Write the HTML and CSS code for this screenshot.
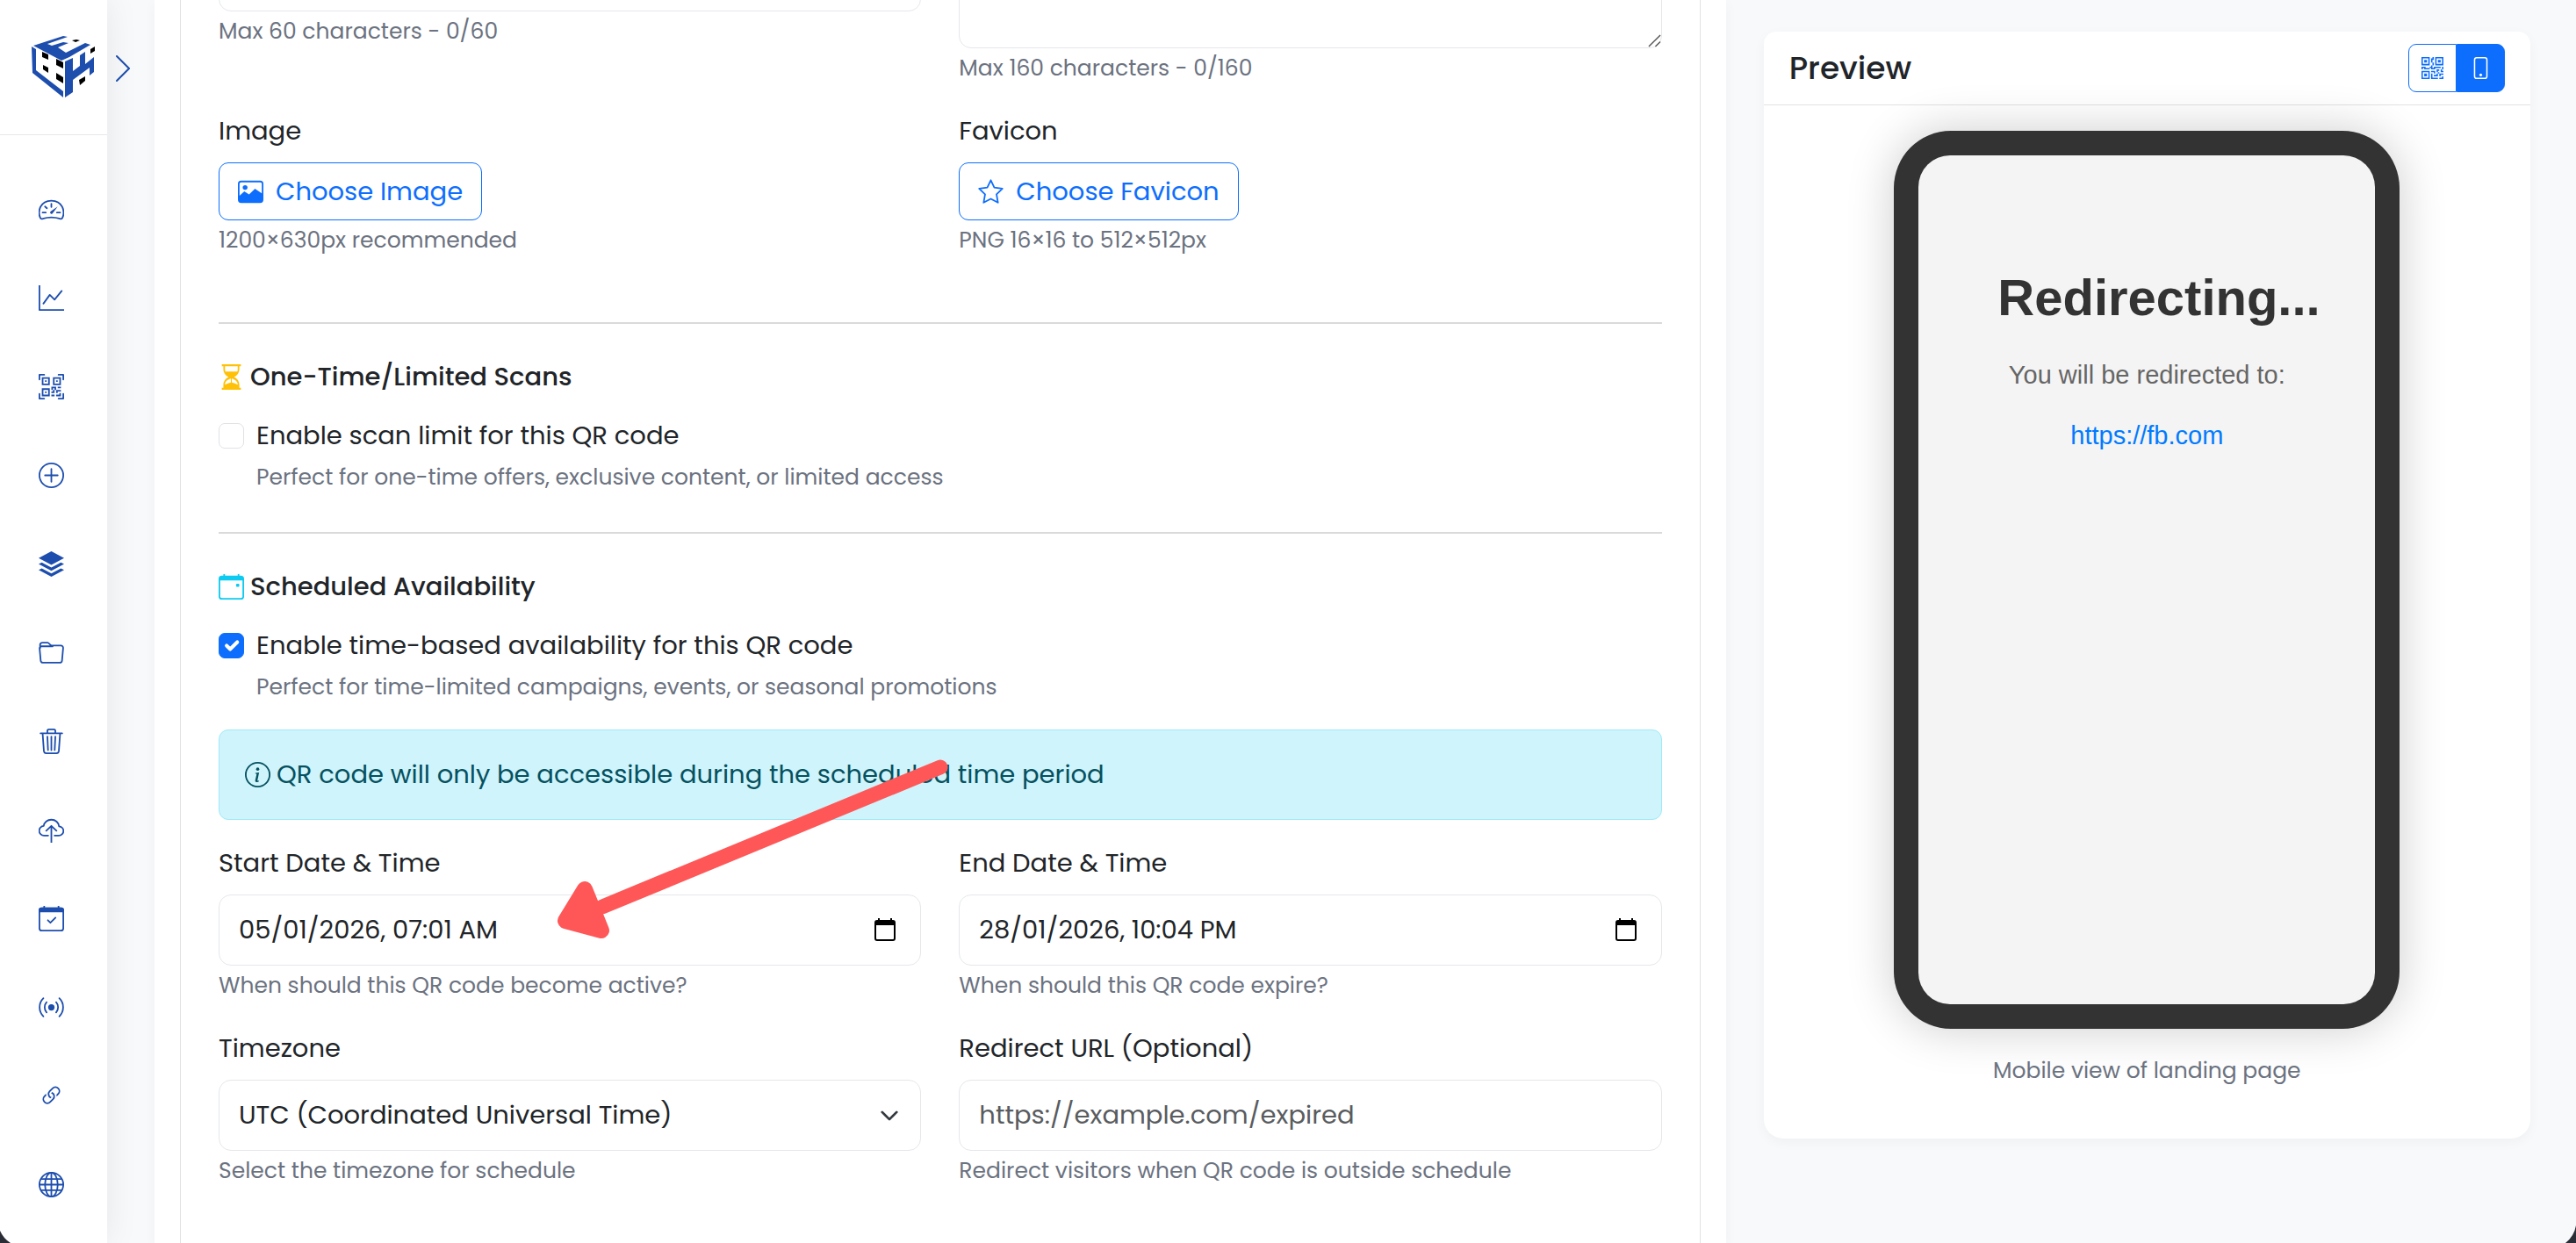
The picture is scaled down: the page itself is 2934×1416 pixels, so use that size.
FILE: index.html
```html
<!DOCTYPE html>
<html lang="en">
	<head>
		<meta charset="UTF-8">
		<title>QR Code</title>
		<link rel="stylesheet" href="styles.css">
	</head>
	<body>
		<aside class="sidebar">
			<div class="logo">
				<a href="#" aria-label="Home">
					<svg viewBox="0 0 73 71">
						<g fill="#1d4eae">
							<path d="M2 11 36 0l5 1-23 8 5 2 13-4 6 1-12 5 9 6 22-11 6 2-24 14-9 4z"/>
							<path d="M0 12l5 3v24l31 24v7L1 42z"/>
							<path d="M38 29l9-4v15l8-6V22l6-4v14l10-8v17l-5 4v-9L47 50v14l-9 6z"/>
						</g>
						<path d="M46 5l5-1 4 1-5 2zM67 15l5-3v5l-5 3zM12 18l7 3v6l-7-3zM28 26l8 4v7l-8-4zM13 33l6 3v6l-6-4zM28 42l8 5v7l-8-5zM54 50l7-4v5l-6 5z"/>
					</svg>
				</a>
				<button class="toggle" type="button" aria-label="Expand menu">
					<svg viewBox="0 0 16 30"><path d="M1 1l14 14L1 29"/></svg>
				</button>
			</div>
			<nav class="menu">
				<a href="#" aria-label="Dashboard"><svg viewBox="0 0 16 16"><path d="M1 13.2C-.7 9.500.8 2.500 8 2.500s8.700 7 7 10.700c-.2.600-.9.900-1.600.7-3.500-1.100-7.300-1.100-10.800 0-.7.200-1.400-.1-1.600-.7zM8 4.500v2M2.500 10h2M11.500 10h2M4 6.200l1.200 1.100"/><path class="fill" d="M12 6.200 8.900 10.400a.9.900 0 1 1-1.300-1.200z"/></svg></a>
				<a href="#" aria-label="Analytics"><svg viewBox="0 0 16 16"><path d="M.5 0v15.500H16M3 11.500 7 6l3 3 4.500-5.500"/></svg></a>
				<a href="#" aria-label="QR codes"><svg viewBox="0 0 16 16"><path class="fill" d="M0 .5A.5.5 0 0 1 .5 0h3a.5.5 0 0 1 0 1H1v2.5a.5.5 0 0 1-1 0zm12 0a.5.5 0 0 1 .5-.5h3a.5.5 0 0 1 .5.5v3a.5.5 0 0 1-1 0V1h-2.5a.5.5 0 0 1-.5-.5M.5 12a.5.5 0 0 1 .5.5V15h2.5a.5.5 0 0 1 0 1h-3a.5.5 0 0 1-.5-.5v-3a.5.5 0 0 1 .5-.5m15 0a.5.5 0 0 1 .5.5v3a.5.5 0 0 1-.5.5h-3a.5.5 0 0 1 0-1H15v-2.5a.5.5 0 0 1 .5-.5M4 4h1v1H4zM7 2H2v5h5zM3 3h3v3H3zm2 8H4v1h1zM7 9H2v5h5zm-4 1h3v3H3zm8-6h1v1h-1zM9 2h5v5H9zm1 1v3h3V3zM8 8v2h1v1H8v1h2v-2h1v2h1v-1h2v-1h-3V8zm2 2H9V9h1zm4 2h-1v1h-2v1h3zm-4 2v-1H8v1zM12 9h2V8h-2z"/></svg></a>
				<a href="#" aria-label="Create"><svg viewBox="0 0 16 16"><circle cx="8" cy="8" r="7.500"/><path d="M8 4v8M4 8h8"/></svg></a>
				<a href="#" aria-label="Bulk"><svg viewBox="0 0 16 16"><path class="fill" d="M8 0l8 4.300-8 4.200L0 4.300zM0 8l2-1 6 3.200L14 7l2 1-8 4.300zM0 11.700l2-1 6 3.200 6-3.200 2 1L8 16z"/></svg></a>
				<a href="#" aria-label="Folders"><svg viewBox="0 0 16 16"><path d="M1 5 .9 3.200c0-.9.600-1.500 1.500-1.500h3.300c.9 0 1.300 1.800 2.500 1.800h5.700c1 0 1.600.8 1.500 1.700l-.7 7.800c-.1.800-.7 1.300-1.400 1.300H2.700c-.8 0-1.400-.5-1.400-1.300L.6 5.200c0-.8.500-1.200 1.200-1.200h7"/></svg></a>
				<a href="#" aria-label="Trash"><svg viewBox="0 0 16 16"><path d="M1.200 3h13.600M5.500 3V1.500c0-.6.400-1 1-1h3c.6 0 1 .4 1 1V3M2.500 3l.8 11c.1.900.7 1.500 1.500 1.500h6.400c.8 0 1.400-.6 1.500-1.500l.8-11M5.500 5l.4 8.500M8 5v8.500M10.500 5l-.4 8.500"/></svg></a>
				<a href="#" aria-label="Upload"><svg viewBox="0 0 16 16"><path d="M6 11.500H3.500a3 3 0 0 1-.3-6C3.500 3.200 5.500 1.500 8 1.500c2.600 0 4.700 1.900 4.800 4.200a2.900 2.900 0 0 1-.2 5.800H10M8 16V5.500M4.800 8.500 8 5.400l3.200 3.100"/></svg></a>
				<a href="#" aria-label="Schedule"><svg viewBox="0 0 16 16"><rect x=".5" y="1.500" width="15" height="14" rx="1.500"/><path class="fill" d="M0 4V2.500C0 1.600.7 1 1.600 1H3V0h1v1h8V0h1v1h1.400c.9 0 1.600.6 1.600 1.500V4z"/><path d="M5.800 9l1.600 1.600 3.200-3.200"/></svg></a>
				<a href="#" aria-label="Broadcast"><svg viewBox="0 0 16 16"><path d="M3 2.300a8 8 0 0 0 0 11.400M13 2.300a8 8 0 0 1 0 11.400M5 4.800a4.800 4.800 0 0 0 0 6.400M11 4.800a4.800 4.800 0 0 1 0 6.400"/><circle class="fill" cx="8" cy="8" r="2"/></svg></a>
				<a href="#" aria-label="Links"><svg viewBox="0 0 16 16"><path class="fill" d="M4.715 6.542 3.343 7.914a3 3 0 1 0 4.243 4.243l1.828-1.829A3 3 0 0 0 8.586 5.500L8 6.086a1 1 0 0 0-.154.199 2 2 0 0 1 .861 3.337L6.880 11.450a2 2 0 1 1-2.830-2.830l.793-.792a4 4 0 0 1-.128-1.287zM6.586 4.672A3 3 0 0 0 7.414 9.500l.775-.776a2 2 0 0 1-.896-3.346L9.120 3.550a2 2 0 1 1 2.830 2.830l-.793.792c.112.420.155.855.128 1.287l1.372-1.372a3 3 0 1 0-4.243-4.243z"/></svg></a>
				<a href="#" aria-label="Domains"><svg viewBox="0 0 16 16"><circle cx="8" cy="8" r="7.500"/><ellipse cx="8" cy="8" rx="4" ry="7.500"/><path d="M8 .5v15M.5 8h15M1.500 4.500h13M1.500 11.500h13"/></svg></a>
			</nav>
		</aside>

		<main class="page">
			<section class="card form-card">
				<form class="panel">
					<div class="row first">
						<div class="field">
							<input type="text" id="title" aria-label="Title">
							<small>Max 60 characters - 0/60</small>
						</div>
						<div class="field">
							<textarea id="desc" aria-label="Description"></textarea>
							<small>Max 160 characters - 0/160</small>
						</div>
					</div>
					<div class="row">
						<div class="field">
							<label for="image">Image</label>
							<button class="btn" id="image" type="button">
								<svg viewBox="0 0 16 16"><path fill="currentColor" d="M2 1h12a2 2 0 0 1 2 2v10a2 2 0 0 1-2 2H2a2 2 0 0 1-2-2V3a2 2 0 0 1 2-2zm-1 9.500 3-2.800 3 2 3.700-3.700 4.300 3V3a1 1 0 0 0-1-1H2a1 1 0 0 0-1 1z"/><circle cx="4.500" cy="5.300" r="1.500" fill="currentColor"/></svg>
								Choose Image
							</button>
							<small>1200×630px recommended</small>
						</div>
						<div class="field">
							<label for="favicon">Favicon</label>
							<button class="btn" id="favicon" type="button">
								<svg viewBox="0 0 16 16"><path fill="none" stroke="currentColor" stroke-linejoin="round" d="M8 .7l2.200 4.600 5.100.7-3.700 3.600.9 5.200L8 12.400l-4.500 2.400.9-5.200L.7 6l5.100-.7z"/></svg>
								Choose Favicon
							</button>
							<small>PNG 16×16 to 512×512px</small>
						</div>
					</div>

					<hr>
					<h6>
						<svg viewBox="0 0 16 16" fill="#ffc107"><path d="M2 0h12v1.200h-1v2c0 2.200-1.300 3.800-3.200 4.800 1.900 1 3.200 2.600 3.200 4.800v2h1V16H2v-1.200h1v-2C3 10.600 4.300 9 6.200 8 4.300 7 3 5.400 3 3.200v-2H2zm2 1.200v2c0 .5.100.9.200 1.300h7.600c.1-.4.200-.8.200-1.300v-2zM7.700 9C5.400 9.700 4 10.900 4 12.800c1.200-.5 2.300-1.100 3.700-1.300zm.6 0v2.500c1.400.2 2.500.8 3.700 1.300C12 10.900 10.600 9.700 8.300 9z"/></svg>
						One-Time/Limited Scans
					</h6>
					<div class="check">
						<input type="checkbox" id="limit">
						<label for="limit">Enable scan limit for this QR code</label>
						<small>Perfect for one-time offers, exclusive content, or limited access</small>
					</div>

					<hr>
					<h6>
						<svg viewBox="0 0 16 16" fill="#0dcaf0"><path d="M3 0h1v1h8V0h1v1h1a2 2 0 0 1 2 2v11a2 2 0 0 1-2 2H2a2 2 0 0 1-2-2V3a2 2 0 0 1 2-2h1zM1 4v10a1 1 0 0 0 1 1h12a1 1 0 0 0 1-1V4zm10.500 2h1a.5.5 0 0 1 .5.5v1a.5.5 0 0 1-.5.5h-1a.5.5 0 0 1-.5-.5v-1a.5.5 0 0 1 .5-.5z"/></svg>
						Scheduled Availability
					</h6>
					<div class="check">
						<input type="checkbox" id="schedule" checked>
						<label for="schedule">Enable time-based availability for this QR code</label>
						<small>Perfect for time-limited campaigns, events, or seasonal promotions</small>
					</div>
					<div class="alert">
						<svg viewBox="0 0 16 16"><circle cx="8" cy="8" r="7.500" fill="none" stroke="currentColor"/><path fill="currentColor" d="M8.900 6.600l-2.300.3-.1.400.5.1c.3.100.3.200.3.500l-.8 3.400c-.2.900.1 1.400.8 1.400.6 0 1.200-.3 1.500-.6l.1-.5c-.2.200-.5.300-.7.300-.3 0-.4-.2-.3-.6z"/><circle cx="8" cy="4.500" r="1" fill="currentColor"/></svg>
						QR code will only be accessible during the scheduled time period
						<!-- pointer to the start date field -->
						<svg class="arrow" viewBox="0 0 460 220"><path d="M441 22 56 181" stroke-width="17"/><path class="head" d="M36 161 14 197 55 208z"/></svg>
					</div>
					<div class="row">
						<div class="field">
							<label for="start">Start Date &amp; Time</label>
							<div class="date">
								<input type="text" id="start" value="05/01/2026, 07:01 AM">
								<button type="button" aria-label="Pick start date"><svg viewBox="0 0 24 26"><path d="M4 0h2v2h12V0h2v2h1a3 3 0 0 1 3 3v18a3 3 0 0 1-3 3H3a3 3 0 0 1-3-3V5a3 3 0 0 1 3-3h1zM2 8v15a1 1 0 0 0 1 1h18a1 1 0 0 0 1-1V8z"/></svg></button>
							</div>
							<small>When should this QR code become active?</small>
						</div>
						<div class="field">
							<label for="end">End Date &amp; Time</label>
							<div class="date">
								<input type="text" id="end" value="28/01/2026, 10:04 PM">
								<button type="button" aria-label="Pick end date"><svg viewBox="0 0 24 26"><path d="M4 0h2v2h12V0h2v2h1a3 3 0 0 1 3 3v18a3 3 0 0 1-3 3H3a3 3 0 0 1-3-3V5a3 3 0 0 1 3-3h1zM2 8v15a1 1 0 0 0 1 1h18a1 1 0 0 0 1-1V8z"/></svg></button>
							</div>
							<small>When should this QR code expire?</small>
						</div>
					</div>
					<div class="row">
						<div class="field">
							<label for="zone">Timezone</label>
							<select id="zone">
								<option>UTC (Coordinated Universal Time)</option>
							</select>
							<small>Select the timezone for schedule</small>
						</div>
						<div class="field">
							<label for="url">Redirect URL (Optional)</label>
							<input type="url" id="url" placeholder="https://example.com/expired">
							<small>Redirect visitors when QR code is outside schedule</small>
						</div>
					</div>
				</form>
			</section>

			<section class="card preview">
				<header>
					<h5>Preview</h5>
					<div class="switch">
						<button type="button" aria-label="QR code"><svg viewBox="0 0 16 16"><path fill="currentColor" d="M2 2h2v2H2zM6 0v6H0V0zM5 1H1v4h4zM4 12H2v2h2zM6 10v6H0v-6zm-5 1v4h4v-4zm11-9h2v2h-2zM10 0v6h6V0zm5 1v4h-4V1zM8 1V0h1v2H8v2H7V1zm0 5V4h1v2zM6 8V7h1V6h1v2h1V7h5v1h-4v1H7V8zm0 0v1H2V8H1v1H0V7h3v1zm10 1h-1V7h1zm-1 0h-1v2h2v-1h-1zm-4 0h2v1h-1v1h-1zm2 3v-1h-1v1h-1v1H9v1h3v-2zm0 0h3v1h-2v1h-1zm-4-1v1h1v-2H7v1zM7 12h1v3h4v1H7zm9 2v2h-3v-1h2v-1z"/></svg></button>
						<button class="on" type="button" aria-label="Mobile"><svg viewBox="0 0 16 16"><rect x="3.500" y=".5" width="9" height="15" rx="1.500" fill="none" stroke="currentColor"/><circle cx="8" cy="13" r="1" fill="currentColor"/></svg></button>
					</div>
				</header>
				<div class="phone">
					<div class="screen">
						<h1>Redirecting...</h1>
						<p>You will be redirected to:</p>
						<p><a href="https://fb.com">https://fb.com</a></p>
					</div>
				</div>
				<small>Mobile view of landing page</small>
			</section>
		</main>

		<svg class="corner left" viewBox="0 0 12 14"><path d="M0 0q4 9 12 14H0z"/></svg>
		<svg class="corner right" viewBox="0 0 12 20"><path d="M12 0q-2 12-12 20h12z"/></svg>
	</body>
</html>
```

FILE: styles.css
```css
*{margin: 0;padding: 0;box-sizing: border-box;}
body{
	font: 29px/43px Poppins, Inter, "Open Sans", sans-serif;
	color: #212529;
	background: #f8f9fb;
	display: flex;
	height: 100vh;
	overflow: hidden;
}
button,input,select,textarea{font: inherit;color: inherit;}
button{cursor: pointer;}
small{
	display: block;
	font-size: 25px;
	line-height: 38px;
	color: #6b7280;
}

/* sidebar */
.sidebar{
	width: 122px;
	flex: none;
	background: #fff;
	box-shadow: 0 0 36px rgba(0,0,0,.08);
	z-index: 2;
}
.logo{
	height: 154px;
	border-bottom: 1px solid #e5e7eb;
	padding: 41px 0 0 36px;
	position: relative;
}
.logo a svg{
	display: block;
	width: 73px;
	height: 71px;
}
.toggle{
	position: absolute;
	left: 132px;
	top: 63px;
	border: 0;
	background: none;
}
.toggle svg{
	display: block;
	width: 16px;
	height: 30px;
	fill: none;
	stroke: #1d4eae;
	stroke-width: 2;
	stroke-linecap: round;
}
.menu{
	display: flex;
	flex-direction: column;
	gap: 72px;
	padding: 70px 0 0 44px;
}
.menu svg{
	display: block;
	width: 29px;
	height: 29px;
	fill: none;
	stroke: #1d4eae;
	stroke-linecap: round;
	stroke-linejoin: round;
}
.menu .fill{
	fill: #1d4eae;
	stroke: none;
}

/* page */
.page{
	flex: 1;
	display: grid;
	grid-template-columns: repeat(12, minmax(0, 1fr));
	column-gap: 43px;
	padding: 0 52px 0 54px;
}
.card{
	background: #fff;
	box-shadow: 0 4px 14px rgba(0,0,0,.04);
}
.form-card{
	grid-column: span 8;
	padding: 0 29px;
}
.panel{
	display: flow-root;
	height: 100%;
	border: 1px solid #e1e2e4;
	border-width: 0 1px;
	padding: 0 43px;
}
.row{
	display: grid;
	grid-template-columns: 1fr 1fr;
	column-gap: 43px;
	padding-bottom: 31px;
}
/* scrolled out at the top */
.first{margin-top: -68px;}
.field label{
	display: block;
	margin-bottom: 14px;
}
.field small{margin-top: 4px;}
.field input,.field textarea,.field select{
	display: block;
	width: 100%;
	height: 81px;
	padding: 0 22px;
	background: #fff;
	border: 1px solid #e5e7eb;
	border-radius: 14px;
	outline: none;
}
.field textarea{height: 123px;}
.field textarea::-webkit-resizer{
	background: url("data:image/svg+xml,%3Csvg xmlns='http://www.w3.org/2000/svg' viewBox='0 0 16 16'%3E%3Cpath stroke='%23555' stroke-width='1.500' d='M1 15 15 1M9 15l6-6'/%3E%3C/svg%3E") center / contain no-repeat;
}
.field input::placeholder{color: #595c5f;}
.field select{
	appearance: none;
	background: #fff url("data:image/svg+xml,%3Csvg xmlns='http://www.w3.org/2000/svg' viewBox='0 0 16 16'%3E%3Cpath fill='none' stroke='%23343a40' stroke-linecap='round' stroke-linejoin='round' stroke-width='2' d='m2 5 6 6 6-6'/%3E%3C/svg%3E") no-repeat right 24px center / 22px;
}
.btn{
	display: flex;
	align-items: center;
	gap: 14px;
	height: 66px;
	padding: 0 21px;
	color: #0d6efd;
	background: #fff;
	border: 1px solid #0d6efd;
	border-radius: 11px;
}
.btn svg{
	width: 29px;
	height: 29px;
}
hr{
	border: 0;
	height: 2px;
	margin: 43px 0;
	background: #d9dadb;
}
h6{
	display: flex;
	align-items: center;
	gap: 7px;
	font-size: 29px;
	line-height: 35px;
	font-weight: 500;
	margin-bottom: 28px;
}
h6 svg,.alert > svg:first-child{
	width: 29px;
	height: 29px;
}
.check{
	display: grid;
	grid-template-columns: 29px 1fr;
	column-gap: 14px;
	row-gap: 7px;
	align-items: center;
	margin-bottom: 43px;
}
.check small{grid-column: 2;}
.check input{
	appearance: none;
	width: 29px;
	height: 29px;
	border: 1px solid #dee2e6;
	border-radius: 7px;
}
.check input:checked{
	border-color: #0d6efd;
	background: #0d6efd url("data:image/svg+xml,%3Csvg xmlns='http://www.w3.org/2000/svg' viewBox='0 0 20 20'%3E%3Cpath fill='none' stroke='%23fff' stroke-linecap='round' stroke-linejoin='round' stroke-width='3' d='m6 10 3 3 6-6'/%3E%3C/svg%3E") center / contain;
}
.alert{
	display: flex;
	align-items: center;
	gap: 7px;
	position: relative;
	z-index: 1;
	margin: -14px 0 28px;
	padding: 29px;
	color: #055160;
	background: #cff4fc;
	border: 1px solid #9eeaf9;
	border-radius: 11px;
}
.arrow{
	position: absolute;
	left: 380px;
	top: 20px;
	width: 460px;
	height: 220px;
	fill: none;
	stroke: #ff5757;
	stroke-linecap: round;
	stroke-linejoin: round;
	pointer-events: none;
}
.arrow .head{
	fill: #ff5757;
	stroke-width: 18;
}
.date{position: relative;}
.date button{
	position: absolute;
	right: 29px;
	top: 27px;
	border: 0;
	background: none;
}
.date svg{
	display: block;
	width: 24px;
	height: 26px;
}

/* preview */
.preview{
	grid-column: span 4;
	align-self: start;
	margin-top: 36px;
	padding-bottom: 58px;
	border-radius: 14px 14px 22px 22px;
}
.preview header{
	display: flex;
	align-items: center;
	justify-content: space-between;
	height: 84px;
	padding: 0 29px;
	border-bottom: 1px solid #e1e2e4;
}
h5{
	font-size: 36px;
	font-weight: 500;
}
.switch{display: flex;}
.switch button{
	width: 55px;
	height: 55px;
	padding: 14px;
	color: #0d6efd;
	background: #fff;
	border: 1px solid #0d6efd;
	border-radius: 9px 0 0 9px;
}
.switch .on{
	color: #fff;
	background: #0d6efd;
	border-radius: 0 9px 9px 0;
}
.switch svg{
	display: block;
	width: 25px;
	height: 25px;
}
.phone{
	width: 576px;
	max-width: 100%;
	margin: 29px auto;
	padding: 28px;
	background: #333;
	border-radius: 65px;
	box-shadow: 0 0 54px rgba(0,0,0,.2);
}
.screen{
	height: 967px;
	padding: 124px 90px 0;
	text-align: center;
	font-family: "Liberation Sans", Arial, sans-serif;
	color: #666;
	background: #f4f4f4;
	border-radius: 36px;
}
.screen h1{
	font-size: 58px;
	line-height: 76px;
	color: #333;
	margin-bottom: 30px;
}
.screen p{
	line-height: 40px;
	margin-bottom: 29px;
}
.screen a{
	color: #007bff;
	text-decoration: none;
}
.preview > small{text-align: center;}

/* window corners */
.corner{
	position: fixed;
	bottom: 0;
	fill: #2b2d36;
	z-index: 3;
}
.left{
	left: 0;
	width: 12px;
	height: 14px;
}
.right{
	right: 0;
	width: 12px;
	height: 20px;
}
```
